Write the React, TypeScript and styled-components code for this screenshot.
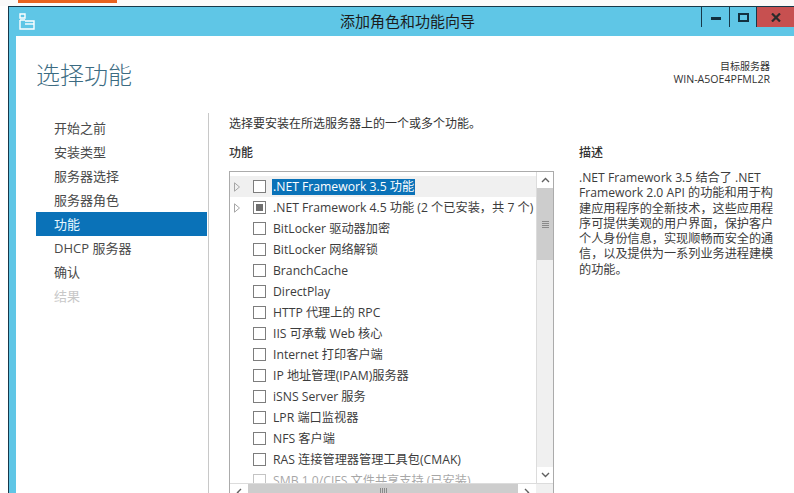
import React from 'react';
import styled, { createGlobalStyle } from 'styled-components';

const GlobalStyle = createGlobalStyle`
    html, body {
        margin: 0;
        padding: 0;
        background: #fff;
    }
    body {
        font-family: "Open Sans", "Noto Sans CJK SC", sans-serif;
        font-size: 12px;
        color: #3c3c3c;
    }
`;

const steps = ['开始之前', '安装类型', '服务器选择', '服务器角色', '功能', 'DHCP 服务器', '确认', '结果'];

const features = [
    { text: '.NET Framework 3.5 功能', expand: true, active: true },
    { text: '.NET Framework 4.5 功能 (2 个已安装，共 7 个)', expand: true, partial: true },
    { text: 'BitLocker 驱动器加密' },
    { text: 'BitLocker 网络解锁' },
    { text: 'BranchCache' },
    { text: 'DirectPlay' },
    { text: 'HTTP 代理上的 RPC' },
    { text: 'IIS 可承载 Web 核心' },
    { text: 'Internet 打印客户端' },
    { text: 'IP 地址管理(IPAM)服务器' },
    { text: 'iSNS Server 服务' },
    { text: 'LPR 端口监视器' },
    { text: 'NFS 客户端' },
    { text: 'RAS 连接管理器管理工具包(CMAK)' },
    { text: 'SMB 1.0/CIFS 文件共享支持 (已安装)', faded: true },
];

const descLines = [
    '.NET Framework 3.5 结合了 .NET',
    'Framework 2.0 API 的功能和用于构',
    '建应用程序的全新技术，这些应用程',
    '序可提供美观的用户界面，保护客户',
    '个人身份信息，实现顺畅而安全的通',
    '信，以及提供为一系列业务进程建模',
    '的功能。',
];

function App() {
    return (
        <Page>
            <GlobalStyle />
            <TopStrip>
                <OrangeTab />
            </TopStrip>
            <Win>
                <TitleBar>
                    <AppIcon width="16" height="17" viewBox="0 0 16 17" fill="none" stroke="#fff" strokeWidth="1.4">
                        <path d="M1 1h5v4H1z" />
                        <path d="M1 7h5M1 7v9h14V8H6" />
                        <path d="M6 11h9" />
                    </AppIcon>
                    <Title>添加角色和功能向导</Title>
                    <WinButtons>
                        <WinButton>
                            <MinGlyph />
                        </WinButton>
                        <MaxButton>
                            <MaxGlyph />
                        </MaxButton>
                        <CloseButton>
                            <svg width="10" height="9" viewBox="0 0 10 9" stroke="#2b2b2b" strokeWidth="2.2">
                                <path d="M1 0.5l8 8M9 0.5l-8 8" />
                            </svg>
                        </CloseButton>
                    </WinButtons>
                </TitleBar>
                <Content>
                    <Header>
                        <Heading>选择功能</Heading>
                        <Target>
                            <TargetLabel>目标服务器</TargetLabel>
                            <div>WIN-A5OE4PFML2R</div>
                        </Target>
                    </Header>
                    <Body>
                        <Sidebar>
                            {steps.map((s, i) => (
                                <Step key={s} $active={i === 4} $disabled={i === 7}>
                                    {s}
                                </Step>
                            ))}
                        </Sidebar>
                        <Main>
                            <Intro>选择要安装在所选服务器上的一个或多个功能。</Intro>
                            <Columns>
                                <div>
                                    <SectionLabel>功能</SectionLabel>
                                    <ListBox>
                                        <ListArea>
                                            <Rows>
                                                {features.map((f) => (
                                                    <Row key={f.text} $active={f.active} $faded={f.faded}>
                                                        <Arrow>
                                                            {f.expand && (
                                                                <svg width="6" height="10" viewBox="0 0 6 10" fill="none" stroke="#a6a6a6">
                                                                    <path d="M0.5 0.8l5 4.2-5 4.2z" />
                                                                </svg>
                                                            )}
                                                        </Arrow>
                                                        <Check>{f.partial && <CheckFill />}</Check>
                                                        <RowText $active={f.active}>{f.text}</RowText>
                                                    </Row>
                                                ))}
                                            </Rows>
                                            <VScroll>
                                                <ScrollBtn>
                                                    <svg width="9" height="6" viewBox="0 0 9 6" fill="none" stroke="#606060" strokeWidth="1.4">
                                                        <path d="M1 5l3.5-3.5L8 5" />
                                                    </svg>
                                                </ScrollBtn>
                                                <VThumb>
                                                    <Grip />
                                                </VThumb>
                                                <VSpacer />
                                                <ScrollBtn>
                                                    <svg width="9" height="6" viewBox="0 0 9 6" fill="none" stroke="#606060" strokeWidth="1.4">
                                                        <path d="M1 1l3.5 3.5L8 1" />
                                                    </svg>
                                                </ScrollBtn>
                                            </VScroll>
                                        </ListArea>
                                        <HScroll>
                                            <HBtn>
                                                <svg width="6" height="9" viewBox="0 0 6 9" fill="none" stroke="#606060" strokeWidth="1.4">
                                                    <path d="M5 1L1.5 4.5 5 8" />
                                                </svg>
                                            </HBtn>
                                            <HThumb>
                                                <HGrip />
                                            </HThumb>
                                            <HBtn>
                                                <svg width="6" height="9" viewBox="0 0 6 9" fill="none" stroke="#606060" strokeWidth="1.4">
                                                    <path d="M1 1l3.5 3.5L1 8" />
                                                </svg>
                                            </HBtn>
                                        </HScroll>
                                    </ListBox>
                                </div>
                                <Description>
                                    <SectionLabel>描述</SectionLabel>
                                    <DescText>
                                        {descLines.map((l) => (
                                            <div key={l}>{l}</div>
                                        ))}
                                    </DescText>
                                </Description>
                            </Columns>
                        </Main>
                    </Body>
                </Content>
            </Win>
        </Page>
    );
}

const Page = styled.div`
    width: 794px;
    height: 493px;
    overflow: hidden;
    display: flex;
    flex-direction: column;
`;
const TopStrip = styled.div`
    height: 6px;
    flex: none;
    padding-left: 18px;
    background: #fafafa;
`;
const OrangeTab = styled.div`
    width: 99px;
    height: 3px;
    background: #e8621f;
`;
const Win = styled.div`
    flex: 1;
    min-height: 0;
    margin-left: 8px;
    border-top: 1px solid #17384a;
    border-left: 1px solid #17384a;
    background: #5fc6e6;
    display: flex;
    flex-direction: column;
`;
const TitleBar = styled.div`
    height: 29px;
    flex: none;
    display: flex;
    align-items: flex-start;
    color: #1c1c1c;
`;
const AppIcon = styled.svg`
    margin: 6px 0 0 10px;
    flex: none;
`;
const Title = styled.div`
    flex: 1;
    padding-left: 305px;
    font-size: 15px;
    line-height: 29px;
`;
const WinButtons = styled.div`
    display: flex;
    height: 20px;
    flex: none;
`;
const WinButton = styled.div`
    width: 28px;
    height: 20px;
    box-sizing: border-box;
    border-left: 1px solid #17384a;
    display: flex;
    align-items: center;
    justify-content: center;
`;
const MaxButton = styled(WinButton)`
    width: 27px;
`;
const CloseButton = styled(WinButton)`
    width: 38px;
    background: #c75050;
`;
const MinGlyph = styled.div`
    width: 10px;
    height: 3px;
    margin-top: 3px;
    background: #12303f;
`;
const MaxGlyph = styled.div`
    width: 7px;
    height: 5px;
    border: 2px solid #12303f;
`;
const Content = styled.div`
    flex: 1;
    min-height: 0;
    margin-left: 7px;
    background: #fff;
    display: flex;
    flex-direction: column;
`;
const Header = styled.div`
    height: 77px;
    flex: none;
    display: flex;
    justify-content: space-between;
    padding: 0 24px 0 20px;
`;
const Heading = styled.div`
    margin-top: 21px;
    font-size: 24px;
    line-height: 36px;
    font-weight: 300;
    color: #3b6b82;
`;
const Target = styled.div`
    margin-top: 24px;
    text-align: right;
    font-size: 10.6px;
    line-height: 13px;
    color: #333;
`;
const TargetLabel = styled.div`
    font-size: 10px;
`;
const Body = styled.div`
    flex: 1;
    min-height: 0;
    display: flex;
`;
const Sidebar = styled.div`
    width: 193px;
    flex: none;
    box-sizing: border-box;
    padding: 3px 0 0 20px;
    border-right: 1px solid #c8c8c8;
`;
const Step = styled.div<{ $active?: boolean; $disabled?: boolean }>`
    width: 171px;
    height: 24px;
    box-sizing: border-box;
    padding-left: 18px;
    line-height: 24px;
    font-size: 13px;
    color: ${(p) => (p.$active ? '#e8f8ff' : p.$disabled ? '#c8c8c8' : '#4a4a4a')};
    background: ${(p) => (p.$active ? '#0a72b8' : 'transparent')};
`;
const Main = styled.div`
    flex: 1;
    min-width: 0;
    padding: 2px 0 0 20px;
`;
const Intro = styled.div`
    line-height: 18px;
    font-size: 12px;
    color: #333;
`;
const Columns = styled.div`
    margin-top: 11px;
    display: flex;
`;
const SectionLabel = styled.div`
    height: 18px;
    line-height: 18px;
    font-size: 12px;
    font-weight: 500;
    color: #333;
`;
const ListBox = styled.div`
    width: 325px;
    height: 322px;
    margin-top: 9px;
    box-sizing: border-box;
    border: 1px solid #ababab;
    border-bottom: none;
    display: flex;
    flex-direction: column;
`;
const ListArea = styled.div`
    flex: 1;
    min-height: 0;
    display: flex;
`;
const Rows = styled.div`
    flex: 1;
    min-width: 0;
    overflow: hidden;
    padding-top: 4px;
`;
const Row = styled.div<{ $active?: boolean; $faded?: boolean }>`
    height: 21px;
    display: flex;
    align-items: center;
    padding-left: 4px;
    background: ${(p) => (p.$active ? '#f0f0f0' : 'transparent')};
    opacity: ${(p) => (p.$faded ? 0.45 : 1)};
`;
const Arrow = styled.div`
    width: 19px;
    flex: none;
    display: flex;
    align-items: center;
`;
const Check = styled.div`
    width: 13px;
    height: 13px;
    flex: none;
    box-sizing: border-box;
    border: 1px solid #7d7d7d;
    background: #fff;
    display: flex;
    align-items: center;
    justify-content: center;
`;
const CheckFill = styled.div`
    width: 7px;
    height: 7px;
    background: #6f6f6f;
`;
const RowText = styled.span<{ $active?: boolean }>`
    margin-left: 6px;
    padding: 0 1px;
    font-size: 12.2px;
    line-height: 16px;
    white-space: nowrap;
    color: ${(p) => (p.$active ? '#fff' : '#3c3c3c')};
    background: ${(p) => (p.$active ? '#0a72b8' : 'transparent')};
`;
const VScroll = styled.div`
    width: 16px;
    flex: none;
    background: #f0f0f0;
    border-left: 1px solid #dcdcdc;
    display: flex;
    flex-direction: column;
`;
const ScrollBtn = styled.div`
    height: 16px;
    flex: none;
    background: #fff;
    display: flex;
    align-items: center;
    justify-content: center;
`;
const VThumb = styled.div`
    height: 72px;
    flex: none;
    background: #cdcdcd;
    display: flex;
    align-items: center;
    justify-content: center;
`;
const Grip = styled.div`
    width: 7px;
    height: 7px;
    background: repeating-linear-gradient(#8a8a8a 0 1px, transparent 1px 2px);
`;
const VSpacer = styled.div`
    flex: 1;
`;
const HScroll = styled.div`
    height: 9px;
    flex: none;
    background: #f0f0f0;
    border-top: 1px solid #dcdcdc;
    display: flex;
    align-items: flex-start;
    overflow: hidden;
`;
const HBtn = styled.div`
    width: 18px;
    height: 16px;
    flex: none;
    background: #fff;
    display: flex;
    align-items: center;
    justify-content: center;
`;
const HThumb = styled.div`
    width: 270px;
    height: 16px;
    background: #cdcdcd;
    display: flex;
    justify-content: center;
    padding-top: 4px;
    box-sizing: border-box;
`;
const HGrip = styled.div`
    width: 7px;
    height: 7px;
    background: repeating-linear-gradient(90deg, #8a8a8a 0 1px, transparent 1px 2px);
`;
const Description = styled.div`
    margin-left: 25px;
    width: 200px;
    flex: none;
`;
const DescText = styled.div`
    margin-top: 8px;
    font-size: 12.15px;
    line-height: 15.3px;
    white-space: nowrap;
    color: #3c3c3c;
`;

export default App;
